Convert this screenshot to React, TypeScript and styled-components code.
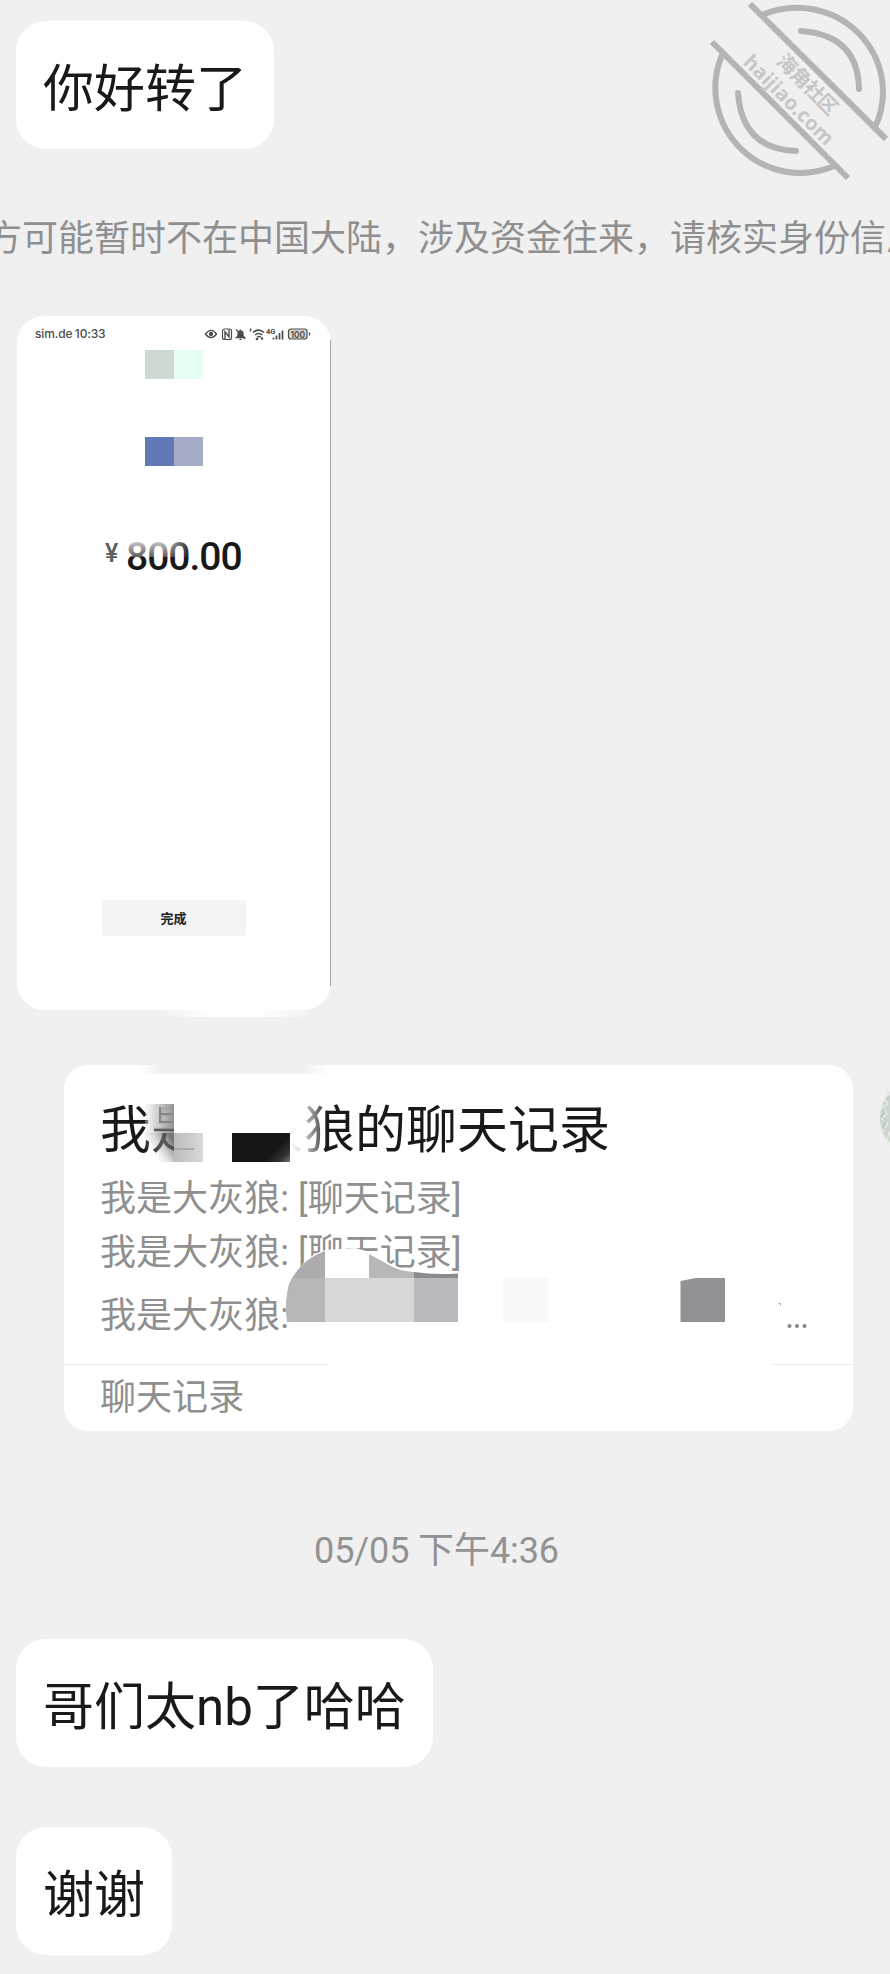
import React from 'react';
import styled, { createGlobalStyle } from 'styled-components';

const GlobalStyle = createGlobalStyle`
  * { box-sizing: border-box; }
  body {
    margin: 0;
    background: #f0f0f0;
    font-family: Roboto, "Noto Sans CJK SC", sans-serif;
    -webkit-font-smoothing: antialiased;
  }
`;

const Chat = styled.main`
  position: relative;
  display: flex;
  flex-direction: column;
  align-items: flex-start;
  width: 890px;
  height: 1974px;
  padding-top: 21px;
  overflow: hidden;
  background: #f0f0f0;
`;

const Bubble = styled.div<{ $top?: number }>`
  flex: none;
  height: 128px;
  margin: ${(p) => p.$top ?? 0}px 0 0 16px;
  padding: 0 27px;
  border-radius: 30px;
  background: #fff;
  color: #191919;
  font-size: 51px;
  line-height: 137px;
  white-space: nowrap;
`;

const Notice = styled.div`
  flex: none;
  align-self: stretch;
  height: 46px;
  margin-top: 66px;
  margin-left: -14px;
  color: #8f8f8f;
  font-size: 36px;
  line-height: 48px;
  white-space: nowrap;
`;

const Time = styled.div`
  flex: none;
  height: 46px;
  margin: 95px 0 0 314px;
  color: #929292;
  font-size: 36px;
  line-height: 50px;
  letter-spacing: -0.1px;
  white-space: nowrap;
`;

const Receipt = styled.section`
  position: relative;
  flex: none;
  display: flex;
  flex-direction: column;
  align-items: center;
  width: 314px;
  height: 694px;
  margin: 55px 0 0 17px;
  border-radius: 27px;
  background: #fff;
`;

const StatusBar = styled.div`
  display: flex;
  justify-content: space-between;
  align-items: center;
  width: 100%;
  height: 18px;
  margin-top: 9px;
  padding: 0 20px 0 18px;
  color: #4c4c4c;
  font: 500 12px/18px Inter, sans-serif;
  letter-spacing: -0.15px;
  word-spacing: -0.6px;
`;

const Mosaic = styled.div<{ $top: number; $left: string; $right: string }>`
  flex: none;
  width: 58px;
  height: 29px;
  margin: ${(p) => p.$top}px 0 0 0;
  background: linear-gradient(90deg, ${(p) => p.$left} 50%, ${(p) => p.$right} 50%);
`;

const Amount = styled.div`
  position: relative;
  display: flex;
  align-items: flex-start;
  width: 140px;
  height: 46px;
  margin: 67px 0 0 0;
  color: #181818;
  font: 500 39px/48px Roboto, sans-serif;
  letter-spacing: -1px;
`;

const Yen = styled.span`
  width: 22px;
  padding-left: 1px;
  color: #5e5e5e;
  font-size: 25px;
  line-height: 42px;
`;

const AmountFade = styled.div`
  position: absolute;
  left: 22px;
  top: 4px;
  width: 68px;
  height: 20px;
  background: linear-gradient(180deg, rgba(255,255,255,0.9), rgba(255,255,255,0.3));
  mask-image: linear-gradient(90deg, #000 60%, transparent);
`;

const Done = styled.button`
  width: 144px;
  height: 36px;
  margin: 321px 1px 0 0;
  padding: 0;
  border: 0;
  border-radius: 3px;
  background: #f4f3f5;
  color: #202020;
  font: 700 13px/36px "Noto Sans CJK SC", sans-serif;
`;

const EdgeLine = styled.i`
  position: absolute;
  right: 0;
  top: 24px;
  width: 1px;
  height: 646px;
  background: #a6a6a6;
`;

const Smear = styled.i`
  position: absolute;
  left: 138px;
  bottom: -7px;
  width: 165px;
  height: 7px;
  background: linear-gradient(90deg, rgba(255,255,255,0), #fff 35%, #fff 60%, rgba(255,255,255,0));
`;

const Record = styled.section`
  position: relative;
  flex: none;
  display: flex;
  flex-direction: column;
  width: 789px;
  height: 366px;
  margin: 55px 0 0 64px;
  border-radius: 24px;
  background: #fff;
`;

const RecordTitle = styled.h2`
  height: 70px;
  margin: 31px 0 0 36px;
  color: #191919;
  font-size: 51px;
  font-weight: 400;
  line-height: 70px;
  white-space: nowrap;
`;

const RecordLine = styled.p<{ $top: number }>`
  height: 46px;
  margin: ${(p) => p.$top}px 0 0 36px;
  color: #8f8f8f;
  font-size: 36px;
  line-height: 46px;
  letter-spacing: 0.06px;
  white-space: nowrap;
`;

const Divider = styled.div`
  display: flex;
  justify-content: space-between;
  height: 1px;
  margin-top: 25px;
  &::before { content: ''; width: 264px; background: #ececec; }
  &::after { content: ''; width: 81px; background: #ececec; }
`;

const Redaction = styled.svg`
  position: absolute;
  left: 0;
  top: 0;
`;

const Avatar = styled.svg`
  position: absolute;
  left: 880px;
  top: 1078px;
`;

const Stamp = styled.svg`
  position: absolute;
  left: 690px;
  top: 0;
`;

function StatusIcons() {
  return (
    <svg width="107" height="14" viewBox="0 0 107 14" fill="none" stroke="#4c4c4c" strokeWidth="1.3">
      <path d="M1.500 7Q7-.2 12.500 7Q7 14.200 1.500 7Z" />
      <circle cx="7" cy="7" r="1.500" fill="#4c4c4c" />
      <rect x="18.500" y="2" width="9" height="10.500" rx="2" strokeWidth="1.200" />
      <path d="M21 12V4.800l4 5V2.500" strokeWidth="1.400" />
      <path d="M32.500 10.500L34 9V7q0-3 2.500-3T39 7v2l1.500 1.500z" fill="#4c4c4c" />
      <path d="M32 2.500l9 9.500" strokeWidth="1.100" />
      <path d="M36.500 2.500v1M35.500 12.300h2" />
      <path d="M46.500 1.500v3M49 5.500q5.500-4.800 11 0M51 8q3.500-3 7.500 0M53.200 10.200q1.800-1.300 3.600 0" strokeWidth="1.500" />
      <circle cx="53" cy="12" r=".7" fill="#4c4c4c" />
      <circle cx="58" cy="11.500" r=".6" fill="#4c4c4c" />
      <text x="62" y="6.800" fontSize="7.500" fontWeight="700" fontFamily="Roboto, sans-serif" fill="#4c4c4c" stroke="none">4G</text>
      <path d="M69.500 12.500v-2M72.500 12.500V8.500M75.500 12.500V6M78.500 12.500V3.500" strokeWidth="1.700" />
      <rect x="84.500" y="2" width="18.500" height="10" rx="2.500" fill="#d6d6d6" strokeWidth="1.200" />
      <path d="M105.500 5.500v3" />
      <text x="86.500" y="10.500" fontSize="9.500" fontWeight="600" fontFamily="Inter, sans-serif" textLength="14.500" lengthAdjust="spacingAndGlyphs" fill="#4c4c4c" stroke="none">100</text>
    </svg>
  );
}

function RecordRedaction() {
  return (
    <Redaction width="789" height="366" viewBox="64 1065 789 366">
      <defs>
        <linearGradient id="edge" x1="0" x2="1">
          <stop offset="0" stopColor="#f0f0f0" stopOpacity="0" />
          <stop offset=".12" stopColor="#f0f0f0" />
          <stop offset=".84" stopColor="#f0f0f0" />
          <stop offset="1" stopColor="#f0f0f0" stopOpacity="0" />
        </linearGradient>
        <linearGradient id="grey" x1="0" x2="1">
          <stop offset="0" stopColor="#e8e8e8" stopOpacity=".3" />
          <stop offset=".3" stopColor="#d8d8d8" stopOpacity=".9" />
          <stop offset="1" stopColor="#929292" />
        </linearGradient>
        <linearGradient id="shade" x1="0" y1="1" x2="1" y2=".35">
          <stop offset=".2" stopColor="#fff" stopOpacity="0" />
          <stop offset="1" stopColor="#555" stopOpacity=".8" />
        </linearGradient>
        <linearGradient id="fade" x1="0" x2="1">
          <stop offset="0" stopColor="#fff" />
          <stop offset=".35" stopColor="#fff" stopOpacity=".85" />
          <stop offset="1" stopColor="#fff" stopOpacity=".15" />
        </linearGradient>
        <linearGradient id="ink" gradientUnits="userSpaceOnUse" x1="262" y1="1133" x2="294" y2="1165">
          <stop offset=".45" stopColor="#141617" />
          <stop offset=".7" stopColor="#303132" />
          <stop offset="1" stopColor="#98989a" />
        </linearGradient>
        <linearGradient id="pale" x1="0" x2="1">
          <stop offset="0" stopColor="#bcbcbc" />
          <stop offset="1" stopColor="#d8d8d8" />
        </linearGradient>
      </defs>
      <rect x="139" y="1065" width="191" height="9" fill="url(#edge)" />

      <rect x="174" y="1096" width="116" height="70" fill="#fff" />
      <rect x="289" y="1096" width="15" height="32" fill="#fff" />
      <rect x="289" y="1096" width="36" height="70" fill="url(#fade)" />
      <rect x="145" y="1104" width="29" height="29" fill="url(#grey)" />
      <path d="M160 1107v16M160 1114h12M160 1122h13" fill="none" stroke="#858585" strokeWidth="2" />
      <path d="M154 1130h20" stroke="#5c5c5c" strokeWidth="2.500" />
      <rect x="145" y="1133" width="29" height="29" fill="url(#shade)" />
      <rect x="174" y="1133" width="29" height="29" fill="url(#pale)" />
      <path d="M174 1149h20" stroke="#aaa" strokeWidth="2" />
      <rect x="232" y="1133" width="58" height="29" fill="url(#ink)" />

      <path d="M287 1322C284 1306 286 1285 301 1266Q311 1254 325 1250L355 1248Q371 1251 386 1261Q407 1276 458 1272V1322Z" fill="#fff" />
      <path d="M325 1251Q311 1256 301 1266Q293 1275 289 1284L287 1294H325Z" fill="#acacae" />
      <path d="M287 1322Q283 1299 292 1278H325V1322Z" fill="#b7b7b9" />
      <path d="M369 1254L387 1264Q398 1271 414 1272V1278H369Z" fill="#b7b7b9" />
      <path d="M414 1272Q433 1275 458 1273.500V1278H414Z" fill="#8a8a8f" />
      <rect x="325" y="1278" width="89" height="44" fill="#d7d7d8" />
      <rect x="414" y="1278" width="44" height="44" fill="#bab9be" />
      <rect x="502.500" y="1278" width="45.500" height="44" fill="#f8f8f8" />
      <rect x="548" y="1279" width="44" height="44" fill="#fefefe" />
      <path d="M680.500 1281L696 1278H725V1322H680.500Z" fill="#929195" />
      <path d="M778.500 1303.500h2v2" fill="none" stroke="#aaa" />
      <g fill="#888">
        <circle cx="789.500" cy="1326" r="2.100" />
        <circle cx="797" cy="1326" r="2.100" />
        <circle cx="804.500" cy="1326" r="2.100" />
      </g>
    </Redaction>
  );
}

function Watermark() {
  return (
    <Stamp width="200" height="190" viewBox="0 0 200 190" fill="none" stroke="#b4b4b4" strokeWidth="6">
      <path d="M60 4L196 139M22 42L158 178" />
      <path d="M72 15A86 84 0 0 1 185 127" />
      <path d="M32 55A85 85 0 0 0 144 166" />
      <path d="M111 31Q168 35 169 89M48 93Q52 149 106 151" strokeLinecap="round" />
      <g fill="#c6c6c6" stroke="none" fontWeight="700" textAnchor="middle">
        <text transform="translate(112.500 89.500) rotate(45)" fontFamily="Noto Sans CJK SC, sans-serif" fontSize="20" textLength="77">海角社区</text>
        <text transform="translate(94 105) rotate(45)" fontFamily="Open Sans, sans-serif" fontSize="20" textLength="118">haijiao.com</text>
      </g>
    </Stamp>
  );
}

export default function App() {
  return (
    <>
      <GlobalStyle />
      <Chat>
        <Bubble>你好转了</Bubble>
        <Notice>方可能暂时不在中国大陆，涉及资金往来，请核实身份信息</Notice>

        <Receipt>
          <StatusBar>
            <span>sim.de 10:33</span>
            <StatusIcons />
          </StatusBar>
          <Mosaic $top={7} $left="#ccdad1" $right="#e6fff2" />
          <Mosaic $top={58} $left="#6179b5" $right="#a3adc5" />
          <Amount>
            <Yen>¥</Yen>800.00
            <AmountFade />
          </Amount>
          <Done>完成</Done>
          <EdgeLine />
          <Smear />
        </Receipt>

        <Record>
          <RecordTitle>我是大灰狼的聊天记录</RecordTitle>
          <RecordLine $top={10}>我是大灰狼: [聊天记录]</RecordLine>
          <RecordLine $top={8}>我是大灰狼: [聊天记录]</RecordLine>
          <RecordLine $top={17}>我是大灰狼:</RecordLine>
          <Divider />
          <RecordLine $top={10}>聊天记录</RecordLine>
          <RecordRedaction />
        </Record>

        <Time>05/05 下午4:36</Time>
        <Bubble $top={67}>哥们太nb了哈哈</Bubble>
        <Bubble $top={60}>谢谢</Bubble>

        <Avatar width="10" height="84" viewBox="0 0 10 84">
          <circle cx="40" cy="40" r="40" fill="#cdd6cd" />
          <path d="M9 7l-3 6 4 3-6 5 4 5-6 4 5 6-5 5 6 4-4 7 6 3-3 6 4 6" fill="none" stroke="#e6ebe5" strokeWidth="1.500" />
          <path d="M2 31l3 3-4 4 5 5-3 6 5 5M8 17v6" fill="none" stroke="#b3c3b3" strokeWidth="1" />
        </Avatar>
        <Watermark />
      </Chat>
    </>
  );
}
